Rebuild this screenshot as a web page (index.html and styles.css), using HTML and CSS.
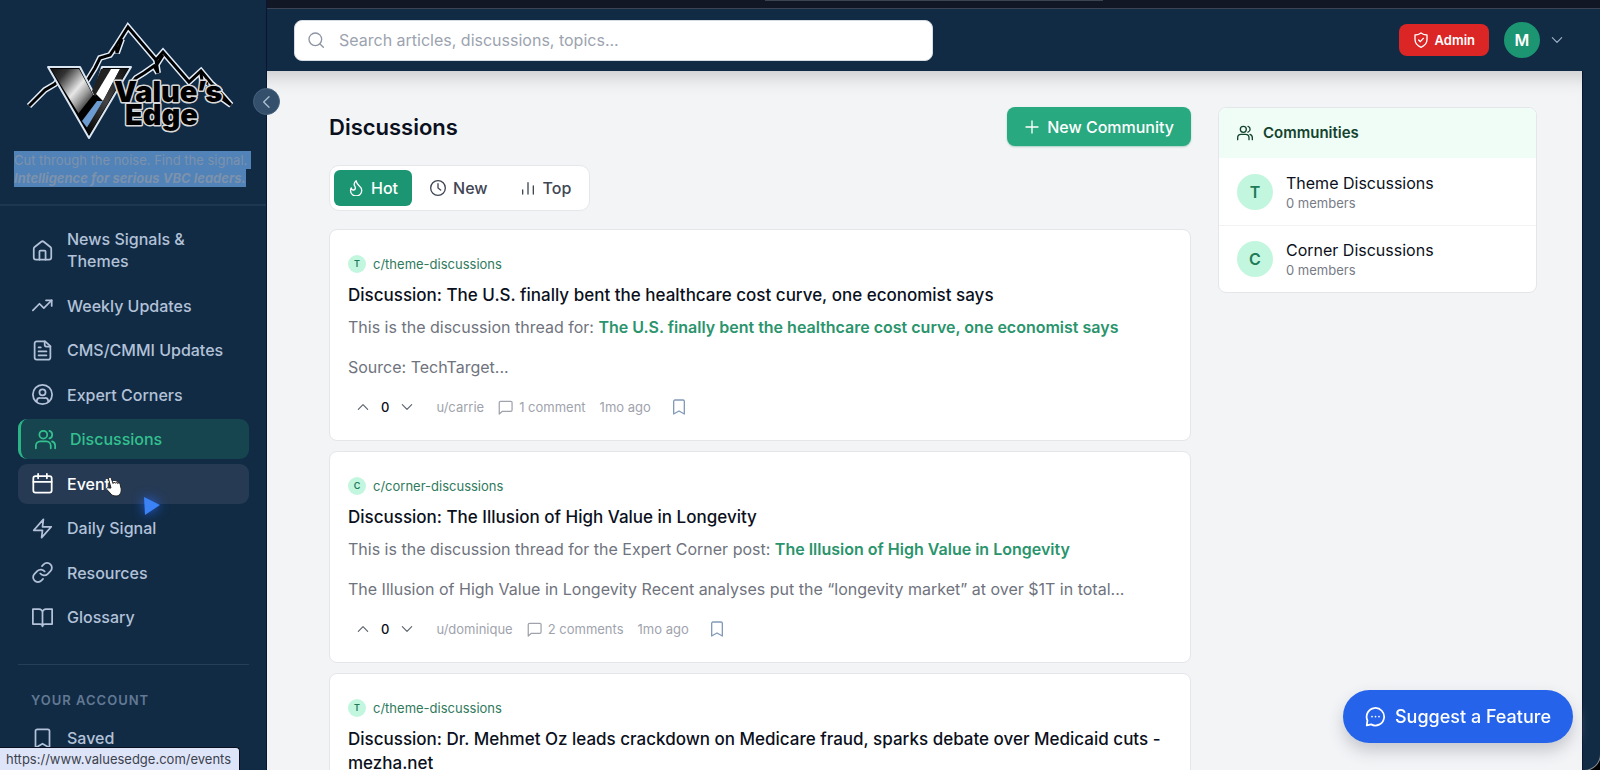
FILE: index.html
```
<!doctype html>
<html lang="en">
<head>
	<meta charset="utf-8">
	<title>Discussions - Value's Edge</title>
	<link rel="stylesheet" href="styles.css">
</head>

<body>
<svg class="sprite" aria-hidden="true">
	<symbol id="i-home" viewBox="0 0 24 24"><path d="M2 10a3 3 0 0 1 1-2l7.600-6a2.200 2.200 0 0 1 2.800 0L21 8a3 3 0 0 1 1 2v10a2.500 2.500 0 0 1-2.500 2.500h-15A2.500 2.500 0 0 1 2 20z"/><path d="M8.500 22.500V13a1 1 0 0 1 1-1h5a1 1 0 0 1 1 1v9.500"/></symbol>
	<symbol id="i-trend" viewBox="0 0 24 24"><path d="M22.500 6L13.500 15l-5-5-7.500 7.500"/><path d="M16 6h6.500v6.500"/></symbol>
	<symbol id="i-file" viewBox="0 0 24 24"><path d="M15 1.500H5.500a2.500 2.500 0 0 0-2.500 2.500v16a2.500 2.500 0 0 0 2.500 2.500h13a2.500 2.500 0 0 0 2.500-2.500V7z"/><path d="M14.500 1.500V5.500a2 2 0 0 0 2 2H21M10 8.500H7.500M16.500 13h-9M16.500 17.500h-9"/></symbol>
	<symbol id="i-user" viewBox="0 0 24 24"><circle cx="12" cy="12" r="11"/><circle cx="12" cy="9.500" r="3.500"/><path d="M5.500 20v-1a3.500 3.500 0 0 1 3.500-3h6a3.500 3.500 0 0 1 3.500 3v1"/></symbol>
	<symbol id="i-users" viewBox="0 0 24 24"><circle cx="9.500" cy="6.500" r="4.500"/><path d="M1 22v-3a5 5 0 0 1 5-5h7a5 5 0 0 1 5 5v3M16.500 2.200a4.500 4.500 0 0 1 0 8.600M23 22v-3a5 5 0 0 0-3.500-4.800"/></symbol>
	<symbol id="i-calendar" viewBox="0 0 24 24"><rect x="1.500" y="3.500" width="21" height="19" rx="2.500"/><path d="M1.500 10h21M7 1v5M17 1v5"/></symbol>
	<symbol id="i-zap" viewBox="0 0 24 24"><path d="M13 1.500L2 14h10l-1 8.500L22 10H12z"/></symbol>
	<symbol id="i-link" viewBox="0 0 24 24"><path d="M9.500 13.200a5.500 5.500 0 0 0 8.300.600l3.300-3.300a5.500 5.500 0 0 0-7.800-7.800l-1.900 1.900"/><path d="M14.500 10.800a5.500 5.500 0 0 0-8.300-.600l-3.300 3.300a5.500 5.500 0 0 0 7.800 7.800l1.900-1.900"/></symbol>
	<symbol id="i-book" viewBox="0 0 24 24"><path d="M12 6.500V22M1 2.500h7a4 4 0 0 1 4 4 4 4 0 0 1 4-4h7v17h-8a3 3 0 0 0-3 2.500 3 3 0 0 0-3-2.500H1z"/></symbol>
	<symbol id="i-bookmark" viewBox="0 0 24 24"><path d="M20 22.500l-8-4.500-8 4.500V3.500a2 2 0 0 1 2-2h12a2 2 0 0 1 2 2z"/></symbol>
	<symbol id="i-search" viewBox="0 0 24 24"><circle cx="11" cy="11" r="9.500"/><path d="M18 18l5 5"/></symbol>
	<symbol id="i-left" viewBox="0 0 24 24"><path d="M15 4l-8 8 8 8"/></symbol>
	<symbol id="i-up" viewBox="0 0 24 24"><path d="M4 16l8-8 8 8"/></symbol>
	<symbol id="i-down" viewBox="0 0 24 24"><path d="M4 8l8 8 8-8"/></symbol>
	<symbol id="i-plus" viewBox="0 0 24 24"><path d="M12 3v18M3 12h18"/></symbol>
	<symbol id="i-shield" viewBox="0 0 24 24"><path d="M12 1.500c2.500 2 5.500 3 9 3V11c0 5.500-3 9.500-9 12-6-2.500-9-6.500-9-12V4.500c3.500 0 6.500-1 9-3z"/><path d="M8.500 12l2.500 2.500 4.500-5"/></symbol>
	<symbol id="i-flame" viewBox="0 0 24 24"><path d="M8 15a3 3 0 0 0 3-3c0-1.700-.6-2.400-1.200-3.600-1.300-2.600-.3-4.900 2.400-7.200.6 3 2.400 5.900 4.800 7.800s3.600 4.200 3.600 6.600a8.400 8.400 0 1 1-16.800 0c0-1.400.5-2.700 1.200-3.600A3 3 0 0 0 8 15z"/></symbol>
	<symbol id="i-clock" viewBox="0 0 24 24"><circle cx="12" cy="12" r="11"/><path d="M12 5.500V12l4 3"/></symbol>
	<symbol id="i-bars" viewBox="0 0 24 24"><path d="M4 21v-6M12 21V4M20 21V9"/></symbol>
	<symbol id="i-comment" viewBox="0 0 24 24"><path d="M22.500 16a2 2 0 0 1-2 2H7l-5 4.500V4a2 2 0 0 1 2-2h16.500a2 2 0 0 1 2 2z"/></symbol>
	<symbol id="i-chat" viewBox="0 0 24 24"><path d="M2.800 16.500A10 10 0 1 1 7 21l-5 1.200z"/><path d="M8 12h.01M12 12h.01M16 12h.01"/></symbol>
</svg>

<div class="window">
	<aside class="sidebar">
		<div class="brand">
			<svg class="logo" viewBox="0 0 206 118" role="img" aria-label="Value's Edge">
				<defs>
					<linearGradient id="steel" x1="0" y1="0" x2="1" y2="1">
						<stop offset="0" stop-color="#111"/>
						<stop offset=".2" stop-color="#333"/>
						<stop offset=".5" stop-color="#e8e8e8"/>
						<stop offset=".65" stop-color="#999"/>
						<stop offset=".85" stop-color="#111"/>
					</linearGradient>
					<linearGradient id="coal" x1="1" y1="0" x2="0" y2="1">
						<stop offset="0" stop-color="#111"/>
						<stop offset=".5" stop-color="#444"/>
						<stop offset="1" stop-color="#000"/>
					</linearGradient>
					<!-- mountain line, drawn twice: light rim, then black -->
					<g id="ridge">
						<path d="M2 85L18 69l10-6 4-5M60 60l8-13 5-10 10-3 6-9L101 6l28 33 7-8 26 30 12-11 10 12 10 9"/>
						<path d="M95 18l-5 14-1-7M129 39l2 13-4-7-10 7-8 5-4 5M136 34l-7 11M174 52l1 8 6 3"/>
						<path d="M190 68l14 16-18-13"/>
					</g>
				</defs>
				<use class="ridge-rim" href="#ridge"/>
				<use class="ridge-core" href="#ridge"/>
				<path class="vee" d="M21 46h32l14 27 8-27h29L62 117z"/>
				<path fill="url(#steel)" d="M24 48h28l15 28-12 22z"/>
				<path fill="#222" d="M74 48h10L68 76l-3-6z"/>
				<path fill="#000" d="M66 74l9 7-17 22-7-10z"/>
				<path fill="#fff" d="M84 48h9L76 80l-7-7z"/>
				<path fill="#6b9bd0" d="M70 80l6 0-15 28-6-8z"/>
				<path fill="url(#coal)" d="M93 48h8L62 114l-3-6 17-28z"/>
				<g class="wordmark">
					<text x="87" y="81">Value’s</text>
					<text x="98" y="104">Edge</text>
				</g>
			</svg>
			<p class="tagline"><span class="selected">Cut through the noise. Find the signal.&nbsp;</span><br><em class="selected">Intelligence for serious VBC leaders.</em></p>
		</div>

		<nav class="nav">
			<ul class="nav-list">
				<li><a class="nav-item" href="#"><svg class="icon"><use href="#i-home"/></svg>News Signals &amp; Themes</a></li>
				<li><a class="nav-item" href="#"><svg class="icon"><use href="#i-trend"/></svg>Weekly Updates</a></li>
				<li><a class="nav-item" href="#"><svg class="icon"><use href="#i-file"/></svg>CMS/CMMI Updates</a></li>
				<li><a class="nav-item" href="#"><svg class="icon"><use href="#i-user"/></svg>Expert Corners</a></li>
				<li><a class="nav-item active" href="#"><svg class="icon"><use href="#i-users"/></svg>Discussions</a></li>
				<li><a class="nav-item hovered" href="#"><svg class="icon"><use href="#i-calendar"/></svg>Events</a></li>
				<li><a class="nav-item" href="#"><svg class="icon"><use href="#i-zap"/></svg>Daily Signal</a></li>
				<li><a class="nav-item" href="#"><svg class="icon"><use href="#i-link"/></svg>Resources</a></li>
				<li><a class="nav-item" href="#"><svg class="icon"><use href="#i-book"/></svg>Glossary</a></li>
			</ul>
			<h2 class="nav-heading">Your account</h2>
			<a class="nav-item" href="#"><svg class="icon"><use href="#i-bookmark"/></svg>Saved</a>
		</nav>
		<button class="collapse" type="button" aria-label="Collapse sidebar"><svg class="icon"><use href="#i-left"/></svg></button>
	</aside>

	<div class="page">
		<div class="browser-edge"><span class="address-edge"></span></div>
		<header class="topbar">
			<label class="search">
				<svg class="icon"><use href="#i-search"/></svg>
				<input type="search" aria-label="Search" placeholder="Search articles, discussions, topics...">
			</label>
			<div class="account">
				<button class="admin" type="button"><svg class="icon"><use href="#i-shield"/></svg>Admin</button>
				<button class="profile" type="button" aria-label="Account menu"><span class="avatar">M</span><svg class="icon"><use href="#i-down"/></svg></button>
			</div>
		</header>

		<main class="content">
			<section class="feed">
				<div class="feed-head">
					<h1>Discussions</h1>
					<button class="new-community" type="button"><svg class="icon"><use href="#i-plus"/></svg>New Community</button>
				</div>
				<div class="tabs">
					<button class="tab selected-tab" type="button"><svg class="icon"><use href="#i-flame"/></svg>Hot</button>
					<button class="tab" type="button"><svg class="icon"><use href="#i-clock"/></svg>New</button>
					<button class="tab" type="button"><svg class="icon"><use href="#i-bars"/></svg>Top</button>
				</div>

				<article class="post">
					<a class="post-community" href="#"><span class="badge">T</span>c/theme-discussions</a>
					<h2>Discussion: The U.S. finally bent the healthcare cost curve, one economist says</h2>
					<p>This is the discussion thread for: <a href="#">The U.S. finally bent the healthcare cost curve, one economist says</a></p>
					<p>Source: TechTarget...</p>
					<div class="meta">
						<div class="votes">
							<button type="button" aria-label="Upvote"><svg class="icon"><use href="#i-up"/></svg></button>
							<span>0</span>
							<button type="button" aria-label="Downvote"><svg class="icon"><use href="#i-down"/></svg></button>
						</div>
						<span>u/carrie</span>
						<span class="comments"><svg class="icon"><use href="#i-comment"/></svg>1 comment</span>
						<span>1mo ago</span>
						<button class="save" type="button" aria-label="Save"><svg class="icon"><use href="#i-bookmark"/></svg></button>
					</div>
				</article>

				<article class="post">
					<a class="post-community" href="#"><span class="badge">C</span>c/corner-discussions</a>
					<h2>Discussion: The Illusion of High Value in Longevity</h2>
					<p>This is the discussion thread for the Expert Corner post: <a href="#">The Illusion of High Value in Longevity</a></p>
					<p>The Illusion of High Value in Longevity Recent analyses put the “longevity market” at over $1T in total...</p>
					<div class="meta">
						<div class="votes">
							<button type="button" aria-label="Upvote"><svg class="icon"><use href="#i-up"/></svg></button>
							<span>0</span>
							<button type="button" aria-label="Downvote"><svg class="icon"><use href="#i-down"/></svg></button>
						</div>
						<span>u/dominique</span>
						<span class="comments"><svg class="icon"><use href="#i-comment"/></svg>2 comments</span>
						<span>1mo ago</span>
						<button class="save" type="button" aria-label="Save"><svg class="icon"><use href="#i-bookmark"/></svg></button>
					</div>
				</article>

				<article class="post">
					<a class="post-community" href="#"><span class="badge">T</span>c/theme-discussions</a>
					<h2>Discussion: Dr. Mehmet Oz leads crackdown on Medicare fraud, sparks debate over Medicaid cuts - mezha.net</h2>
				</article>
			</section>

			<aside class="communities">
				<h2><svg class="icon"><use href="#i-users"/></svg>Communities</h2>
				<a class="community" href="#">
					<span class="badge">T</span>
					<span class="community-text">Theme Discussions<small>0 members</small></span>
				</a>
				<a class="community" href="#">
					<span class="badge">C</span>
					<span class="community-text">Corner Discussions<small>0 members</small></span>
				</a>
			</aside>
		</main>
	</div>
</div>

<button class="suggest" type="button"><svg class="icon"><use href="#i-chat"/></svg>Suggest a Feature</button>
<div class="status">https://www.valuesedge.com/events</div>

<svg class="hand" viewBox="0 0 16 21" aria-hidden="true"><path d="M5 12L2.600 3.200a1.400 1.400 0 0 1 2.700-.8L7 7.500a1.300 1.300 0 0 1 2.400-.3 1.300 1.300 0 0 1 2.300.3 1.300 1.300 0 0 1 2.400.5l1 4.500c.6 3.500-1 7.500-5 7.500-3 0-4.600-1-6-3L.8 13.500c-.8-1.400.9-2.500 2.200-1.500z"/></svg>
<svg class="pointer" viewBox="0 0 16 18" aria-hidden="true"><path d="M0 0l16 8L1 18z"/></svg>
</body>
</html>
```
FILE: styles.css
```
* {box-sizing: border-box;}
body {margin: 0; background: #000; color: #0b1020; font-family: Inter, "Liberation Sans", sans-serif; font-size: 16px; line-height: 24px;}
h1, h2, p, ul {margin: 0; padding: 0;}
ul {list-style: none;}
a {color: inherit; text-decoration: none;}
button {margin: 0; padding: 0; border: 0; background: none; color: inherit; font: inherit; cursor: pointer;}
.sprite {display: none;}
.icon {flex: none; width: 16px; height: 16px; fill: none; stroke: currentColor; stroke-width: 2; stroke-linecap: round; stroke-linejoin: round;}

.window {display: flex; height: 100vh; overflow: hidden; background: #112b45; border-bottom-right-radius: 16px; box-shadow: 0 0 0 1px #8a8f96;}

/* sidebar */
.sidebar {position: relative; z-index: 2; flex: none; width: 267px; height: 100vh; background: #112b45; border-right: 1px solid #0b1430; color: #b3c2d8;}
.brand {height: 206px; padding: 21px 14px 0; border-bottom: 2px solid #1d3751;}
.logo {display: block; width: 206px; height: 118px; margin: 0 13px 12px; overflow: visible;}
.ridge-rim {fill: none; stroke: #e3edf8; stroke-width: 6; stroke-linejoin: miter;}
.ridge-core {fill: none; stroke: #000; stroke-width: 3; stroke-linejoin: miter;}
.vee {fill: #000; stroke: #dbe6f3; stroke-width: 2; stroke-linejoin: round;}
.wordmark {font-size: 29px; font-weight: 900; fill: #000; stroke: #d9d9d9; stroke-width: 3; paint-order: stroke; stroke-linejoin: round;}
.tagline {color: #7c92ac; font-size: 13px; line-height: 18px; white-space: nowrap;}
.tagline em {font-weight: 700;}
.selected {display: inline-block; background: #5182b8; vertical-align: top;}
.nav {padding: 13px 17px 0 18px;}
.nav-list {display: flex; flex-direction: column; justify-content: space-between; height: 418px;}
.nav-item {display: flex; align-items: center; gap: 14px; padding: 9px 14px; border-radius: 9px; font-weight: 500; line-height: 22px;}
.nav-item .icon {width: 21px; height: 21px;}
.nav-item.active {border-left: 3px solid #2bb586; background: #16454f; color: #34c08f;}
.nav-item.hovered {background: #263a54; color: #fff;}
.nav-heading {margin-top: 27px; padding: 25px 13px 8px; border-top: 1px solid #263e58; color: #627993; font-size: 13px; font-weight: 600; line-height: 20px; letter-spacing: 1px; text-transform: uppercase;}
.collapse {position: absolute; top: 88px; right: -14px; display: grid; place-items: center; width: 27px; height: 27px; border: 1px solid #46627d; border-radius: 50%; background: #334f6b; color: #aebfd2;}

/* top bar */
.page {display: flex; flex: 1; flex-direction: column; min-width: 0;}
.browser-edge {flex: none; height: 9px; border-bottom: 1px solid #3a4455; background: #111724;}
.address-edge {display: block; width: 338px; height: 1px; margin-left: 498px; background: #3b4453;}
.topbar {position: relative; z-index: 1; display: flex; flex: none; align-items: center; justify-content: space-between; height: 62px; padding: 0 36px 0 27px;}
.search {display: flex; flex: 0 1 639px; align-items: center; gap: 15px; height: 41px; padding: 0 13px; border: 1px solid #d5dbe3; border-radius: 8px; background: #fff; color: #8d94a3;}
.search input {flex: 1; min-width: 0; padding: 0; border: 0; outline: 0; background: none; font: inherit;}
.search input::placeholder {color: #9ca3af;}
.account {display: flex; align-items: center; gap: 15px;}
.admin {display: flex; align-items: center; gap: 6px; height: 32px; padding: 0 14px; border-radius: 8px; background: #dc2626; color: #fff; font-size: 13px; font-weight: 600;}
.profile {display: flex; align-items: center; gap: 10px; color: #9fb3c8;}
.avatar {display: grid; place-items: center; width: 36px; height: 36px; border-radius: 50%; background: #1c9672; color: #fff; font-weight: 600;}
.profile .icon {width: 14px; height: 14px;}

/* discussions */
.content {display: flex; flex: 1; align-items: flex-start; gap: 27px; min-height: 0; margin-right: 17px; padding: 36px 45px 0 62px; overflow: hidden; border-right: 1px solid #0b1430; background: #f3f4f6; box-shadow: inset 0 20px 18px -14px #c9cacc;}
.feed {flex: 1; min-width: 0;}
.feed-head {display: flex; align-items: center; justify-content: space-between; margin-bottom: 19px;}
.feed-head h1 {font-size: 22px; font-weight: 600;}
.new-community {display: flex; align-items: center; gap: 7px; height: 39px; padding: 0 17px; border-radius: 8px; background: #28a980; color: #fff; font-weight: 500; box-shadow: 0 1px 2px #a9cfc1;}
.tabs {display: inline-flex; gap: 4px; margin-bottom: 18px; padding: 4px; border: 1px solid #e5e7eb; border-radius: 10px; background: #fff; vertical-align: top;}
.tab {display: flex; align-items: center; gap: 7px; height: 36px; padding: 0 14px; border-radius: 6px; color: #3f4654; font-weight: 500;}
.tab.selected-tab {background: #1c9672; color: #fff;}
.post {min-height: 212px; margin-bottom: 10px; padding: 25px 18px 20px; border: 1px solid #e4e6ea; border-radius: 8px; background: #fff;}
.post-community {display: flex; align-items: center; gap: 7px; color: #2f7a5c; font-size: 13px; line-height: 18px;}
.badge {display: grid; flex: none; place-items: center; width: 18px; height: 18px; border-radius: 50%; background: #c3f6df; color: #1f7a5a; font-size: 9px; font-weight: 600;}
.post h2 {margin: 10px 0 8px; font-size: 17px; font-weight: 500;}
.post p {margin-bottom: 16px; color: #6f737e;}
.post p a {color: #2a946c; font-weight: 600;}
.meta {display: flex; align-items: center; gap: 14px; color: #a0a3ad; font-size: 13px;}
.votes {display: flex; align-items: center; gap: 11px; margin-right: 8px; padding-left: 8px; color: #0b1020; font-weight: 500;}
.votes button {display: flex; color: #5d636e;}
.votes .icon {width: 14px; height: 14px;}
.comments {display: flex; align-items: center; gap: 6px;}
.comments .icon {width: 15px; height: 15px;}
.save {display: flex; margin-left: 6px; color: #829bb8;}

/* communities */
.communities {flex: 0 0 319px; overflow: hidden; border: 1px solid #e4e6ea; border-radius: 8px; background: #fff;}
.communities h2 {display: flex; align-items: center; gap: 10px; height: 50px; padding: 0 18px; background: #f0fdf6; color: #14432f; font-size: 15px; font-weight: 600;}
.community {display: flex; align-items: center; gap: 13px; height: 67px; padding: 0 18px;}
.community + .community {border-top: 1px solid #f1f2f4;}
.community .badge {width: 36px; height: 36px; font-size: 16px;}
.community-text {display: grid; line-height: 22px;}
.community-text small {color: #767b86; font-size: 13px; line-height: 18px;}

/* floating things */
.suggest {position: fixed; right: 27px; bottom: 27px; z-index: 3; display: flex; align-items: center; gap: 9px; height: 53px; padding: 0 22px; border-radius: 27px; background: #2563eb; color: #fff; font-size: 18px; font-weight: 500; box-shadow: 0 8px 16px #c4c7ce;}
.suggest .icon {width: 21px; height: 21px;}
.status {position: fixed; bottom: 0; left: 0; z-index: 3; padding: 0 8px 0 6px; border: 1px solid #0b1020; border-width: 1px 1px 0 0; border-radius: 0 4px 0 0; background: #dfe5f8; color: #3c424d; font-size: 13px; line-height: 22px;}
.hand {position: absolute; top: 476px; left: 106px; z-index: 4; width: 16px; height: 21px; fill: #fff; stroke: #222; stroke-width: 1;}
.pointer {position: absolute; top: 497px; left: 144px; z-index: 4; width: 16px; height: 18px; fill: #3b82f6; filter: drop-shadow(0 0 6px #2563eb);}
```
